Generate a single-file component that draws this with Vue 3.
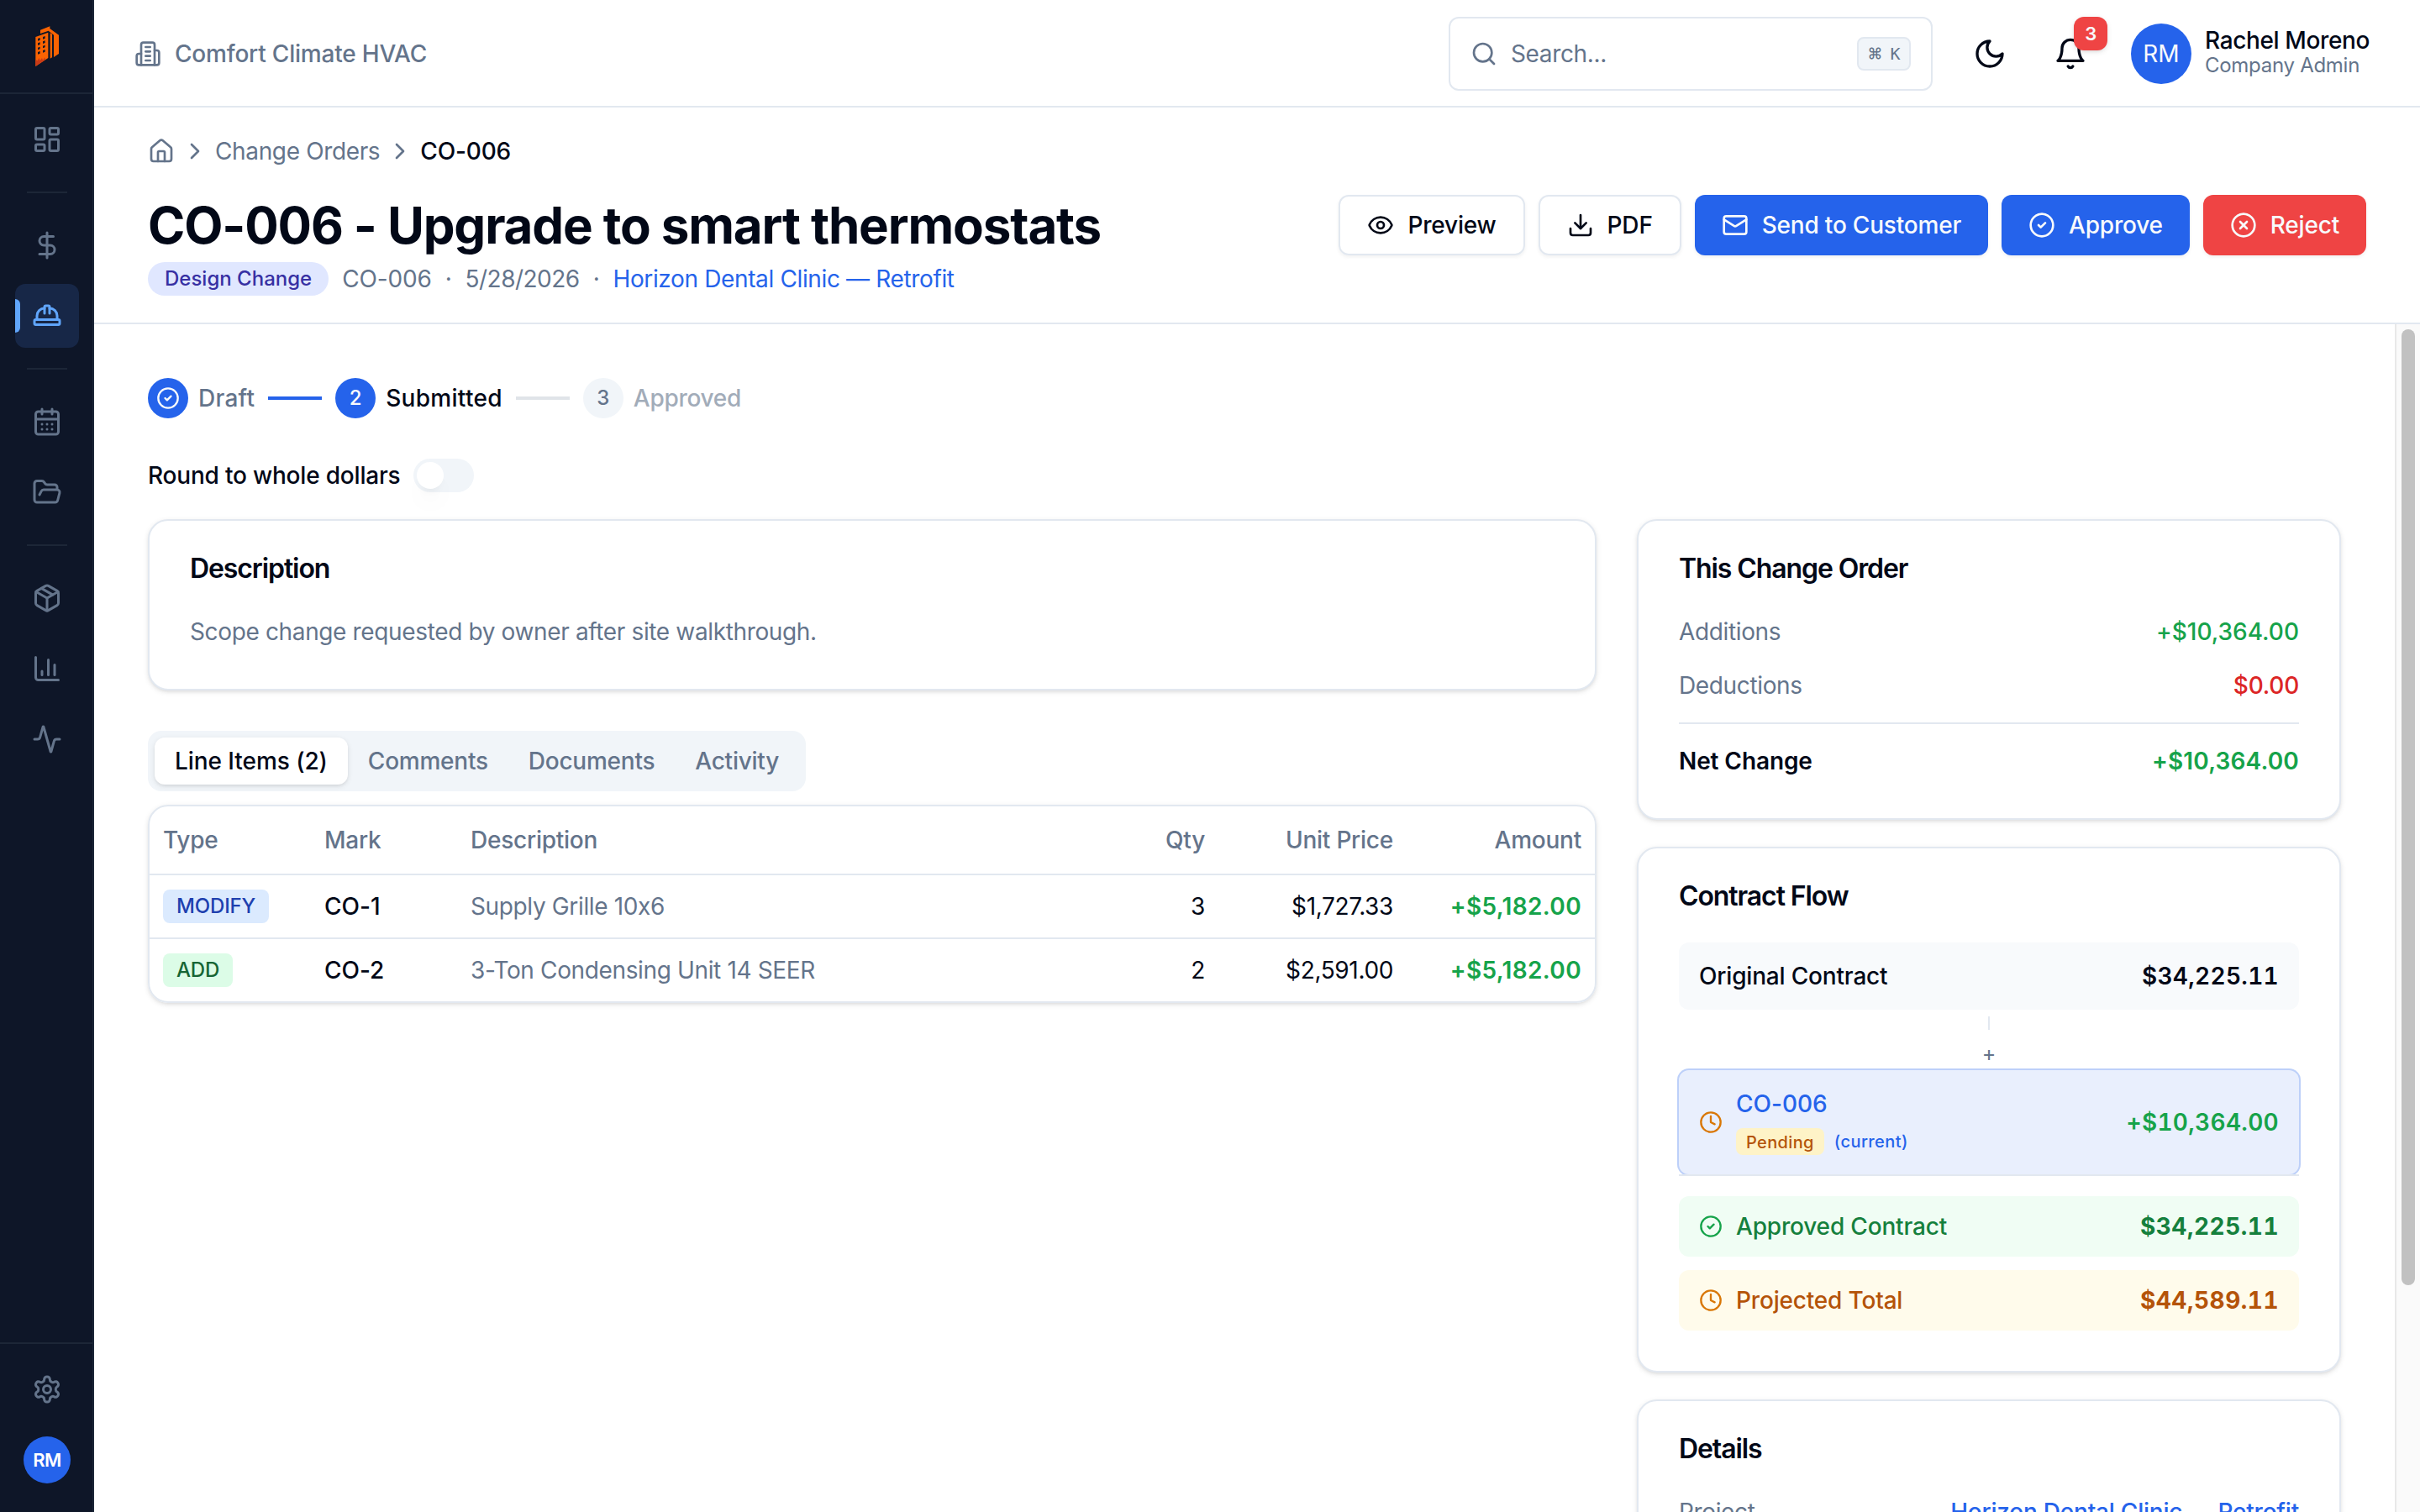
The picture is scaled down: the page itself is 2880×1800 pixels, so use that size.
<template>
    <div class="app">
        <aside class="sidebar">
            <div class="logo">
                <svg viewBox="120 30 96 156" width="32" height="52">
                    <path d="M127 75 L172 59 V150 L127 180 Z" fill="#f96302" />
                    <path d="M127 156 L134 160 L139 150 L143 159 L150 150 L153 158 L160 148 L162 156 L127 180 Z" fill="#c93a17" />
                    <path d="M144 57 V50 L178 37 V45 L210 68 V135 L192 147 V68 L173 53 L144 63 Z" fill="#f96302" />
                    <path d="M179 60 L186 65 V148 L179 152 Z" fill="#f96302" />
                    <path d="M135 81 l8 -3 v8 l-8 3 z M153 75 l8 -3 v8 l-8 3 z M135 97 l8 -3 v8 l-8 3 z M153 91 l8 -3 v8 l-8 3 z M135 113 l8 -3 v8 l-8 3 z M153 107 l8 -3 v8 l-8 3 z M135 129 l8 -3 v8 l-8 3 z M153 123 l8 -3 v8 l-8 3 z" fill="#0e1628" />
                </svg>
            </div>
            <nav class="nav">
                <div v-for="(group, i) in navGroups" :key="i" class="nav-group">
                    <a v-for="item in group" :key="item" class="nav-item" :class="{ active: item === 'hardHat' }">
                        <Icon :name="item" class="icon-36" />
                    </a>
                </div>
            </nav>
            <div class="sidebar-footer">
                <a class="nav-item"><Icon name="settings" class="icon-36" /></a>
                <a class="nav-item"><span class="avatar small">RM</span></a>
            </div>
        </aside>

        <div class="main">
            <header class="topbar">
                <div class="company">
                    <Icon name="building" class="icon-32" />
                    <span>Comfort Climate HVAC</span>
                </div>
                <div class="topbar-right">
                    <div class="search">
                        <Icon name="search" class="icon-32" />
                        <span class="placeholder">Search...</span>
                        <kbd><span class="cmd">⌘</span><span>K</span></kbd>
                    </div>
                    <button class="icon-button moon"><Icon name="moon" class="icon-40" /></button>
                    <button class="icon-button bell">
                        <Icon name="bell" class="icon-40" />
                        <span class="count">3</span>
                    </button>
                    <span class="avatar">RM</span>
                    <div class="user">
                        <p class="user-name">Rachel Moreno</p>
                        <p class="user-role">Company Admin</p>
                    </div>
                </div>
            </header>

            <section class="page-header">
                <div class="breadcrumb">
                    <Icon name="home" class="icon-32" />
                    <Icon name="chevron" class="icon-32" />
                    <span>Change Orders</span>
                    <Icon name="chevron" class="icon-32" />
                    <span class="current">CO-006</span>
                </div>
                <div class="heading">
                    <div>
                        <h1>CO-006 - Upgrade to smart thermostats</h1>
                        <div class="meta">
                            <span class="pill">Design Change</span>
                            <span class="number">CO-006</span>
                            <span>·</span>
                            <span class="date">5/28/2026</span>
                            <span>·</span>
                            <a class="link">Horizon Dental Clinic — Retrofit</a>
                        </div>
                    </div>
                    <div class="actions">
                        <button v-for="action in actions" :key="action.label" class="btn" :class="action.type">
                            <Icon :name="action.icon" class="icon-32" />
                            {{ action.label }}
                        </button>
                    </div>
                </div>
            </section>

            <div class="scroll-area">
                <div class="content">
                    <div class="stepper">
                        <span class="step-dot done"><Icon name="circleCheck" class="icon-28" /></span>
                        <span class="step-label muted">Draft</span>
                        <span class="step-line done"></span>
                        <span class="step-dot done">2</span>
                        <span class="step-label current">Submitted</span>
                        <span class="step-line"></span>
                        <span class="step-dot">3</span>
                        <span class="step-label faded">Approved</span>
                    </div>

                    <div class="round-toggle">
                        <span>Round to whole dollars</span>
                        <span class="switch" @click="rounded = !rounded"><span class="thumb" :class="{ on: rounded }"></span></span>
                    </div>

                    <div class="columns">
                        <div class="left">
                            <section class="card">
                                <h3>Description</h3>
                                <div class="card-body">
                                    <p class="muted">Scope change requested by owner after site walkthrough.</p>
                                </div>
                            </section>

                            <div class="tabs">
                                <button v-for="tab in tabs" :key="tab" class="tab" :class="{ active: tab === activeTab }" @click="activeTab = tab">{{ tab }}</button>
                            </div>

                            <div class="table">
                                <div class="tr th">
                                    <span>Type</span>
                                    <span>Mark</span>
                                    <span>Description</span>
                                    <span class="num">Qty</span>
                                    <span class="num">Unit Price</span>
                                    <span class="num">Amount</span>
                                </div>
                                <div v-for="row in lineItems" :key="row.mark" class="tr">
                                    <span><span class="tag" :class="row.type.toLowerCase()">{{ row.type }}</span></span>
                                    <span class="mark">{{ row.mark }}</span>
                                    <span class="muted">{{ row.description }}</span>
                                    <span class="num">{{ row.qty }}</span>
                                    <span class="num">{{ row.price }}</span>
                                    <span class="num amount">{{ row.amount }}</span>
                                </div>
                            </div>
                        </div>

                        <div class="right">
                            <section class="card">
                                <h3>This Change Order</h3>
                                <div class="card-body totals">
                                    <div class="total-row">
                                        <span class="muted">Additions</span>
                                        <span class="green plain">+$10,364.00</span>
                                    </div>
                                    <div class="total-row">
                                        <span class="muted">Deductions</span>
                                        <span class="red">$0.00</span>
                                    </div>
                                    <div class="divider"></div>
                                    <div class="total-row net">
                                        <span>Net Change</span>
                                        <span class="green">+$10,364.00</span>
                                    </div>
                                </div>
                            </section>

                            <section class="card">
                                <h3>Contract Flow</h3>
                                <div class="card-body flow">
                                    <div class="flow-box original">
                                        <span>Original Contract</span>
                                        <span class="value">$34,225.11</span>
                                    </div>
                                    <div class="connector">
                                        <span class="stem"></span>
                                        <span class="plus">+</span>
                                    </div>
                                    <div class="flow-box order">
                                        <Icon name="clock" class="icon-28 amber" />
                                        <div class="order-info">
                                            <a class="link">CO-006</a>
                                            <div class="order-status">
                                                <span class="pending">Pending</span>
                                                <span class="link">(current)</span>
                                            </div>
                                        </div>
                                        <span class="value green">+$10,364.00</span>
                                    </div>
                                    <div class="divider flow-divider"></div>
                                    <div class="flow-box approved">
                                        <Icon name="circleCheck" class="icon-28 green" />
                                        <span>Approved Contract</span>
                                        <span class="value">$34,225.11</span>
                                    </div>
                                    <div class="flow-box projected">
                                        <Icon name="clock" class="icon-28 amber" />
                                        <span>Projected Total</span>
                                        <span class="value">$44,589.11</span>
                                    </div>
                                </div>
                            </section>

                            <section class="card">
                                <h3>Details</h3>
                                <div class="card-body">
                                    <div class="total-row">
                                        <span class="muted">Project</span>
                                        <a class="link">Horizon Dental Clinic — Retrofit</a>
                                    </div>
                                </div>
                            </section>
                        </div>
                    </div>
                </div>
                <div class="scrollbar"><div class="scroll-thumb"></div></div>
            </div>
        </div>
    </div>
</template>

<script setup>
import { h, ref } from 'vue'

const icons = {
    dashboard: ['M4 3h5a1 1 0 0 1 1 1v7a1 1 0 0 1-1 1H4a1 1 0 0 1-1-1V4a1 1 0 0 1 1-1z', 'M15 3h5a1 1 0 0 1 1 1v3a1 1 0 0 1-1 1h-5a1 1 0 0 1-1-1V4a1 1 0 0 1 1-1z', 'M15 12h5a1 1 0 0 1 1 1v7a1 1 0 0 1-1 1h-5a1 1 0 0 1-1-1v-7a1 1 0 0 1 1-1z', 'M4 16h5a1 1 0 0 1 1 1v3a1 1 0 0 1-1 1H4a1 1 0 0 1-1-1v-3a1 1 0 0 1 1-1z'],
    dollar: ['M12 2v20', 'M17 5H9.5a3.5 3.5 0 0 0 0 7h5a3.5 3.5 0 0 1 0 7H6'],
    hardHat: ['M2 18a1 1 0 0 0 1 1h18a1 1 0 0 0 1-1v-2a1 1 0 0 0-1-1H3a1 1 0 0 0-1 1v2z', 'M10 10V5a1 1 0 0 1 1-1h2a1 1 0 0 1 1 1v5', 'M4 15v-3a6 6 0 0 1 6-6', 'M14 6a6 6 0 0 1 6 6v3'],
    calendar: ['M8 2v4', 'M16 2v4', 'M5 4h14a2 2 0 0 1 2 2v14a2 2 0 0 1-2 2H5a2 2 0 0 1-2-2V6a2 2 0 0 1 2-2z', 'M3 10h18', 'M8 14h.01', 'M12 14h.01', 'M16 14h.01', 'M8 18h.01', 'M12 18h.01', 'M16 18h.01'],
    folder: ['m6 14 1.5-2.9A2 2 0 0 1 9.24 10H20a2 2 0 0 1 1.94 2.5l-1.54 6a2 2 0 0 1-1.95 1.5H4a2 2 0 0 1-2-2V5a2 2 0 0 1 2-2h3.9a2 2 0 0 1 1.69.9l.81 1.2a2 2 0 0 0 1.67.9H18a2 2 0 0 1 2 2v2'],
    box: ['m7.5 4.27 9 5.15', 'M21 8a2 2 0 0 0-1-1.73l-7-4a2 2 0 0 0-2 0l-7 4A2 2 0 0 0 3 8v8a2 2 0 0 0 1 1.73l7 4a2 2 0 0 0 2 0l7-4A2 2 0 0 0 21 16Z', 'm3.3 7 8.7 5 8.7-5', 'M12 22V12'],
    chart: ['M3 3v16a2 2 0 0 0 2 2h16', 'M18 17V9', 'M13 17V5', 'M8 17v-3'],
    activity: ['M22 12h-2.48a2 2 0 0 0-1.93 1.46l-2.35 8.36a.25.25 0 0 1-.48 0L9.24 2.18a.25.25 0 0 0-.48 0l-2.35 8.36A2 2 0 0 1 4.49 12H2'],
    settings: ['M12.22 2h-.44a2 2 0 0 0-2 2v.18a2 2 0 0 1-1 1.73l-.43.25a2 2 0 0 1-2 0l-.15-.08a2 2 0 0 0-2.73.73l-.22.38a2 2 0 0 0 .73 2.73l.15.1a2 2 0 0 1 1 1.72v.51a2 2 0 0 1-1 1.74l-.15.09a2 2 0 0 0-.73 2.73l.22.38a2 2 0 0 0 2.73.73l.15-.08a2 2 0 0 1 2 0l.43.25a2 2 0 0 1 1 1.73V20a2 2 0 0 0 2 2h.44a2 2 0 0 0 2-2v-.18a2 2 0 0 1 1-1.73l.43-.25a2 2 0 0 1 2 0l.15.08a2 2 0 0 0 2.73-.73l.22-.39a2 2 0 0 0-.73-2.73l-.15-.08a2 2 0 0 1-1-1.74v-.5a2 2 0 0 1 1-1.74l.15-.09a2 2 0 0 0 .73-2.73l-.22-.38a2 2 0 0 0-2.73-.73l-.15.08a2 2 0 0 1-2 0l-.43-.25a2 2 0 0 1-1-1.73V4a2 2 0 0 0-2-2z', 'M9 12a3 3 0 1 0 6 0a3 3 0 1 0-6 0'],
    building: ['M6 22V4a2 2 0 0 1 2-2h8a2 2 0 0 1 2 2v18Z', 'M6 12H4a2 2 0 0 0-2 2v6a2 2 0 0 0 2 2h2', 'M18 9h2a2 2 0 0 1 2 2v9a2 2 0 0 1-2 2h-2', 'M10 6h4', 'M10 10h4', 'M10 14h4', 'M10 18h4'],
    search: ['M3 11a8 8 0 1 0 16 0a8 8 0 1 0-16 0', 'm21 21-4.3-4.3'],
    moon: ['M12 3a6 6 0 0 0 9 9 9 9 0 1 1-9-9Z'],
    bell: ['M6 8a6 6 0 0 1 12 0c0 7 3 9 3 9H3s3-2 3-9', 'M10.3 21a1.94 1.94 0 0 0 3.4 0'],
    home: ['M15 21v-8a1 1 0 0 0-1-1h-4a1 1 0 0 0-1 1v8', 'M3 10a2 2 0 0 1 .709-1.528l7-5.999a2 2 0 0 1 2.582 0l7 5.999A2 2 0 0 1 21 10v9a2 2 0 0 1-2 2H5a2 2 0 0 1-2-2z'],
    chevron: ['m9 18 6-6-6-6'],
    eye: ['M2.062 12.348a1 1 0 0 1 0-.696 10.75 10.75 0 0 1 19.876 0 1 1 0 0 1 0 .696 10.75 10.75 0 0 1-19.876 0', 'M9 12a3 3 0 1 0 6 0a3 3 0 1 0-6 0'],
    download: ['M21 15v4a2 2 0 0 1-2 2H5a2 2 0 0 1-2-2v-4', 'm7 10 5 5 5-5', 'M12 15V3'],
    mail: ['M4 4h16a2 2 0 0 1 2 2v12a2 2 0 0 1-2 2H4a2 2 0 0 1-2-2V6a2 2 0 0 1 2-2z', 'm22 7-8.97 5.7a1.94 1.94 0 0 1-2.06 0L2 7'],
    circleCheck: ['M2 12a10 10 0 1 0 20 0a10 10 0 1 0-20 0', 'm9 12 2 2 4-4'],
    circleX: ['M2 12a10 10 0 1 0 20 0a10 10 0 1 0-20 0', 'm15 9-6 6', 'm9 9 6 6'],
    clock: ['M2 12a10 10 0 1 0 20 0a10 10 0 1 0-20 0', 'M12 6v6l4 2']
}

const Icon = (props) => h('svg', { class: 'icon', viewBox: '0 0 24 24' }, icons[props.name].map((d) => h('path', { d })))
Icon.props = ['name']

const navGroups = [['dashboard'], ['dollar', 'hardHat'], ['calendar', 'folder'], ['box', 'chart', 'activity']]

const actions = [
    { label: 'Preview', icon: 'eye', type: 'outline' },
    { label: 'PDF', icon: 'download', type: 'outline' },
    { label: 'Send to Customer', icon: 'mail', type: 'primary' },
    { label: 'Approve', icon: 'circleCheck', type: 'primary' },
    { label: 'Reject', icon: 'circleX', type: 'danger' }
]

const rounded = ref(false)
const tabs = ['Line Items (2)', 'Comments', 'Documents', 'Activity']
const activeTab = ref('Line Items (2)')

const lineItems = [
    { type: 'MODIFY', mark: 'CO-1', description: 'Supply Grille 10x6', qty: 3, price: '$1,727.33', amount: '+$5,182.00' },
    { type: 'ADD', mark: 'CO-2', description: '3-Ton Condensing Unit 14 SEER', qty: 2, price: '$2,591.00', amount: '+$5,182.00' }
]
</script>

<style>
body {
    overflow: hidden;
    background: #ffffff;
}
</style>

<style scoped>
* {
    box-sizing: border-box;
    margin: 0;
}

.app {
    display: flex;
    height: 100vh;
    overflow: hidden;
    font-family: Inter, "Liberation Sans", sans-serif;
    font-size: 28px;
    line-height: 40px;
    letter-spacing: -0.36px;
    font-feature-settings: "calt" 0;
    color: #020817;
    -webkit-font-smoothing: antialiased;
}

button {
    border: none;
    background: none;
    padding: 0;
    font: inherit;
    letter-spacing: inherit;
    color: inherit;
}

.icon {
    display: block;
    flex-shrink: 0;
    fill: none;
    stroke: currentColor;
    stroke-width: 2;
    stroke-linecap: round;
    stroke-linejoin: round;
}

.icon-28 {
    width: 28px;
    height: 28px;
}

.icon-32 {
    width: 32px;
    height: 32px;
}

.icon-36 {
    width: 36px;
    height: 36px;
}

.icon-40 {
    width: 40px;
    height: 40px;
}

/* sidebar */
.sidebar {
    display: flex;
    flex-direction: column;
    flex-shrink: 0;
    width: 112px;
    background: #0e1628;
    border-right: 2px solid #1c2637;
}

.logo {
    display: flex;
    align-items: center;
    justify-content: center;
    height: 112px;
    padding-left: 2px;
    border-bottom: 2px solid #1c2637;
}

.nav {
    flex: 1;
    padding: 16px 16px 16px 18px;
}

.nav-group {
    display: flex;
    flex-direction: column;
    gap: 8px;
}

.nav-group + .nav-group::before {
    content: "";
    width: 48px;
    height: 2px;
    margin: 24px auto 16px;
    background: #1c2637;
}

.nav-item {
    position: relative;
    display: flex;
    align-items: center;
    justify-content: center;
    width: 76px;
    height: 76px;
    border-radius: 12px;
    color: #64748b;
}

.nav-item.active {
    background: #172747;
    color: #60a5fa;
}

.nav-item.active::before {
    content: "";
    position: absolute;
    left: 0;
    top: 18px;
    width: 6px;
    height: 40px;
    border-radius: 0 6px 6px 0;
    background: #60a5fa;
}

.sidebar-footer {
    display: flex;
    flex-direction: column;
    gap: 8px;
    padding: 16px 16px 24px 18px;
    border-top: 2px solid #1c2637;
}

.avatar {
    display: flex;
    align-items: center;
    justify-content: center;
    width: 72px;
    height: 72px;
    border-radius: 50%;
    background: #2563eb;
    color: #f8fafc;
    letter-spacing: 0;
}

.avatar.small {
    width: 56px;
    height: 56px;
    font-size: 22px;
    font-weight: 600;
    letter-spacing: -0.5px;
    color: #ffffff;
}

/* top bar */
.main {
    display: flex;
    flex: 1;
    flex-direction: column;
    min-width: 0;
}

.topbar {
    display: flex;
    align-items: center;
    justify-content: space-between;
    flex-shrink: 0;
    height: 128px;
    padding: 2px 60px 0 48px;
    border-bottom: 2px solid #e2e8f0;
}

.company {
    display: flex;
    align-items: center;
    gap: 16px;
    font-weight: 500;
    letter-spacing: -0.2px;
    color: #64748b;
}

.topbar-right {
    display: flex;
    align-items: center;
}

.search {
    display: flex;
    align-items: center;
    gap: 16px;
    width: 576px;
    height: 88px;
    margin-right: 32px;
    padding: 0 24px;
    border: 2px solid #e2e8f0;
    border-radius: 12px;
    color: #64748b;
}

.placeholder {
    flex: 1;
}

kbd {
    display: flex;
    align-items: center;
    justify-content: center;
    gap: 9px;
    width: 64px;
    height: 40px;
    border: 2px solid #e2e8f0;
    border-radius: 8px;
    background: #f1f5f9;
    font-family: "DejaVu Sans Mono", monospace;
    font-size: 20px;
    letter-spacing: 0;
}

.cmd {
    font-family: Inter, sans-serif;
    font-size: 18px;
    font-weight: 500;
}

.icon-button {
    position: relative;
    display: flex;
    align-items: center;
    justify-content: center;
    width: 72px;
    height: 72px;
}

.bell {
    margin-left: 24px;
    margin-right: 36px;
}

.count {
    position: absolute;
    top: -8px;
    right: -8px;
    width: 40px;
    height: 40px;
    border-radius: 12px;
    background: #ef4444;
    box-shadow: 0 2px 6px rgba(0, 0, 0, 0.1), 0 2px 4px -2px rgba(0, 0, 0, 0.1);
    color: #f8fafc;
    font-size: 22px;
    font-weight: 600;
    text-align: center;
}

.user {
    width: 196px;
    margin-left: 16px;
    white-space: nowrap;
}

.user-name {
    font-weight: 500;
    line-height: 28px;
}

.user-role {
    font-size: 24px;
    line-height: 32px;
    letter-spacing: -0.28px;
    color: #64748b;
}

/* page header */
.page-header {
    flex-shrink: 0;
    height: 258px;
    padding: 32px 64px;
    border-bottom: 2px solid #e2e8f0;
}

.breadcrumb {
    display: flex;
    align-items: center;
    gap: 8px;
    margin-bottom: 32px;
    color: #64748b;
}

.breadcrumb .current {
    font-weight: 500;
    letter-spacing: -0.15px;
    color: #020817;
}

.heading {
    display: flex;
    align-items: flex-start;
    justify-content: space-between;
}

h1 {
    font-size: 60px;
    font-weight: 700;
    line-height: 72px;
    letter-spacing: -1.13px;
}

.meta {
    display: flex;
    align-items: center;
    gap: 16px;
    margin-top: 8px;
    color: #64748b;
}

.pill {
    padding: 0 20px;
    border-radius: 20px;
    background: #e0e7ff;
    color: #3730a3;
    font-size: 24px;
    font-weight: 500;
    letter-spacing: 0;
}

.number {
    letter-spacing: -0.15px;
}

.date {
    letter-spacing: -0.5px;
}

.link {
    color: #2563eb;
}

.actions {
    display: flex;
    gap: 16px;
}

.btn {
    display: flex;
    align-items: center;
    gap: 16px;
    height: 72px;
    padding: 0 32px;
    border-radius: 12px;
    box-shadow: 0 2px 4px rgba(0, 0, 0, 0.06);
    font-weight: 500;
    letter-spacing: -0.2px;
    white-space: nowrap;
}

.outline {
    border: 2px solid #e2e8f0;
}

.primary {
    background: #2563eb;
    color: #f8fafc;
}

.danger {
    background: #ef4444;
    color: #f8fafc;
}

/* content */
.scroll-area {
    display: flex;
    flex: 1;
    min-height: 0;
    overflow: hidden;
}

.content {
    flex: 1;
    padding: 64px;
}

.scrollbar {
    width: 30px;
    padding: 6px 0 0 6px;
    border-left: 2px solid #e8e8e8;
    background: #fafafa;
}

.scroll-thumb {
    width: 16px;
    height: 1138px;
    border-radius: 8px;
    background: #c1c1c1;
}

.stepper {
    display: flex;
    align-items: center;
    height: 48px;
    font-weight: 500;
}

.step-dot {
    display: flex;
    align-items: center;
    justify-content: center;
    width: 48px;
    height: 48px;
    border-radius: 50%;
    background: #f1f5f9;
    color: #64748b;
    font-size: 24px;
    letter-spacing: 0;
}

.step-dot.done {
    background: #2563eb;
    color: #f8fafc;
}

.step-label {
    margin: 0 16px 0 12px;
    letter-spacing: 0.25px;
}

.step-label.current {
    letter-spacing: 0.3px;
}

.step-label.faded {
    letter-spacing: -0.3px;
    color: #a2acb9;
}

.step-line {
    width: 64px;
    height: 4px;
    margin-right: 16px;
    background: #e0e4e9;
}

.step-line.done {
    background: #2563eb;
}

.muted {
    color: #64748b;
}

.round-toggle {
    display: flex;
    align-items: center;
    gap: 16px;
    margin: 48px 0 32px;
    font-weight: 500;
    letter-spacing: -0.2px;
}

.switch {
    width: 72px;
    height: 40px;
    padding: 4px;
    border-radius: 20px;
    background: #f1f5f9;
}

.thumb {
    display: block;
    width: 32px;
    height: 32px;
    border-radius: 50%;
    background: #ffffff;
    box-shadow: 0 20px 30px -6px rgba(0, 0, 0, 0.05), 0 8px 12px -8px rgba(0, 0, 0, 0.1);
}

.thumb.on {
    margin-left: 32px;
}

.columns {
    display: grid;
    grid-template-columns: 1724px 838px;
    gap: 48px;
    align-items: start;
}

.right {
    display: flex;
    flex-direction: column;
    gap: 32px;
}

.card {
    border: 2px solid #e2e8f0;
    border-radius: 24px;
    background: #ffffff;
    box-shadow: 0 2px 6px rgba(0, 0, 0, 0.1), 0 2px 4px -2px rgba(0, 0, 0, 0.1);
}

h3 {
    padding: 37px 48px 35px;
    font-size: 32px;
    font-weight: 600;
    letter-spacing: -1.1px;
}

.card-body {
    padding: 0 48px 48px;
}

/* tabs and line items */
.tabs {
    display: inline-flex;
    height: 72px;
    margin: 48px 0 16px;
    padding: 8px;
    border-radius: 16px;
    background: #f1f5f9;
    color: #64748b;
    vertical-align: top;
}

.tab {
    height: 56px;
    padding: 0 24px;
    border-radius: 12px;
    font-weight: 500;
    letter-spacing: -0.24px;
}

.tab.active {
    background: #ffffff;
    box-shadow: 0 2px 6px rgba(0, 0, 0, 0.1), 0 2px 4px -2px rgba(0, 0, 0, 0.1);
    color: #020817;
    letter-spacing: -0.06px;
}

.table {
    border: 2px solid #e2e8f0;
    border-radius: 24px;
    box-shadow: 0 2px 6px rgba(0, 0, 0, 0.1), 0 2px 4px -2px rgba(0, 0, 0, 0.1);
}

.tr {
    display: grid;
    grid-template-columns: 192px 174px 1fr 160px 224px 224px;
    align-items: center;
    height: 76px;
    border-bottom: 2px solid #e2e8f0;
}

.tr > span {
    padding: 0 16px;
}

.tr.th {
    height: 82px;
    font-weight: 500;
    letter-spacing: -0.24px;
    color: #64748b;
}

.tr:last-child {
    height: 74px;
    border-bottom: none;
}

.num {
    text-align: right;
}

.tr > .mark {
    font-weight: 500;
    letter-spacing: 0;
}

.tr > .amount {
    font-weight: 600;
    letter-spacing: 0.35px;
    color: #16a34a;
}

.tag {
    display: inline-block;
    padding: 0 16px;
    border-radius: 8px;
    font-size: 24px;
    font-weight: 500;
    letter-spacing: -0.15px;
    vertical-align: top;
}

.modify {
    background: #dbeafe;
    color: #1e40af;
}

.add {
    background: #dcfce7;
    color: #166534;
}

/* summary cards */
.totals {
    display: flex;
    flex-direction: column;
    gap: 24px;
}

.total-row {
    display: flex;
    justify-content: space-between;
}

.total-row > :last-child {
    font-weight: 500;
    letter-spacing: -0.22px;
}

.total-row > .plain {
    letter-spacing: 0;
}

.total-row.net > span {
    font-weight: 600;
    letter-spacing: -0.1px;
}

.total-row.net > .green {
    letter-spacing: 0.15px;
}

.divider {
    height: 2px;
    background: #e2e8f0;
}

.green {
    color: #16a34a;
}

.red {
    color: #dc2626;
}

.amber {
    color: #d97706;
}

.flow-box {
    display: flex;
    align-items: center;
    gap: 16px;
    height: 72px;
    padding: 0 24px;
    border-radius: 12px;
    font-weight: 500;
    letter-spacing: -0.18px;
}

.value {
    margin-left: auto;
    font-weight: 700;
    font-variant-numeric: tabular-nums;
    letter-spacing: 0.5px;
}

.original {
    height: 80px;
    background: #f8fafc;
}

.original .value,
.order .value {
    font-weight: 600;
    letter-spacing: 0.3px;
}

.connector {
    display: flex;
    flex-direction: column;
    align-items: center;
    height: 72px;
    padding-top: 8px;
}

.stem {
    width: 2px;
    height: 16px;
    background: #e2e8f0;
}

.plus {
    margin-top: 12px;
    font-size: 25px;
    line-height: 32px;
    letter-spacing: 0;
    color: #64748b;
}

.order {
    height: 124px;
    background: #e9effd;
    box-shadow: 0 0 0 2px #bdd0f9;
}

.order-info {
    height: 84px;
}

.order-info > .link {
    display: block;
    letter-spacing: 0;
}

.order-status {
    display: flex;
    align-items: center;
    gap: 12px;
    margin-top: 8px;
    font-size: 20px;
    line-height: 32px;
    letter-spacing: 0.35px;
}

.order-status .link {
    padding-top: 1px;
    letter-spacing: 0.45px;
}

.pending {
    height: 32px;
    padding: 1px 12px 0;
    border-radius: 8px;
    background: #fef3c7;
    color: #b45309;
}

.flow-divider {
    position: relative;
    margin-bottom: 24px;
}

.approved {
    margin-bottom: 16px;
    background: #f0fdf4;
    color: #15803d;
}

.projected {
    background: #fffbeb;
    color: #b45309;
}
</style>
